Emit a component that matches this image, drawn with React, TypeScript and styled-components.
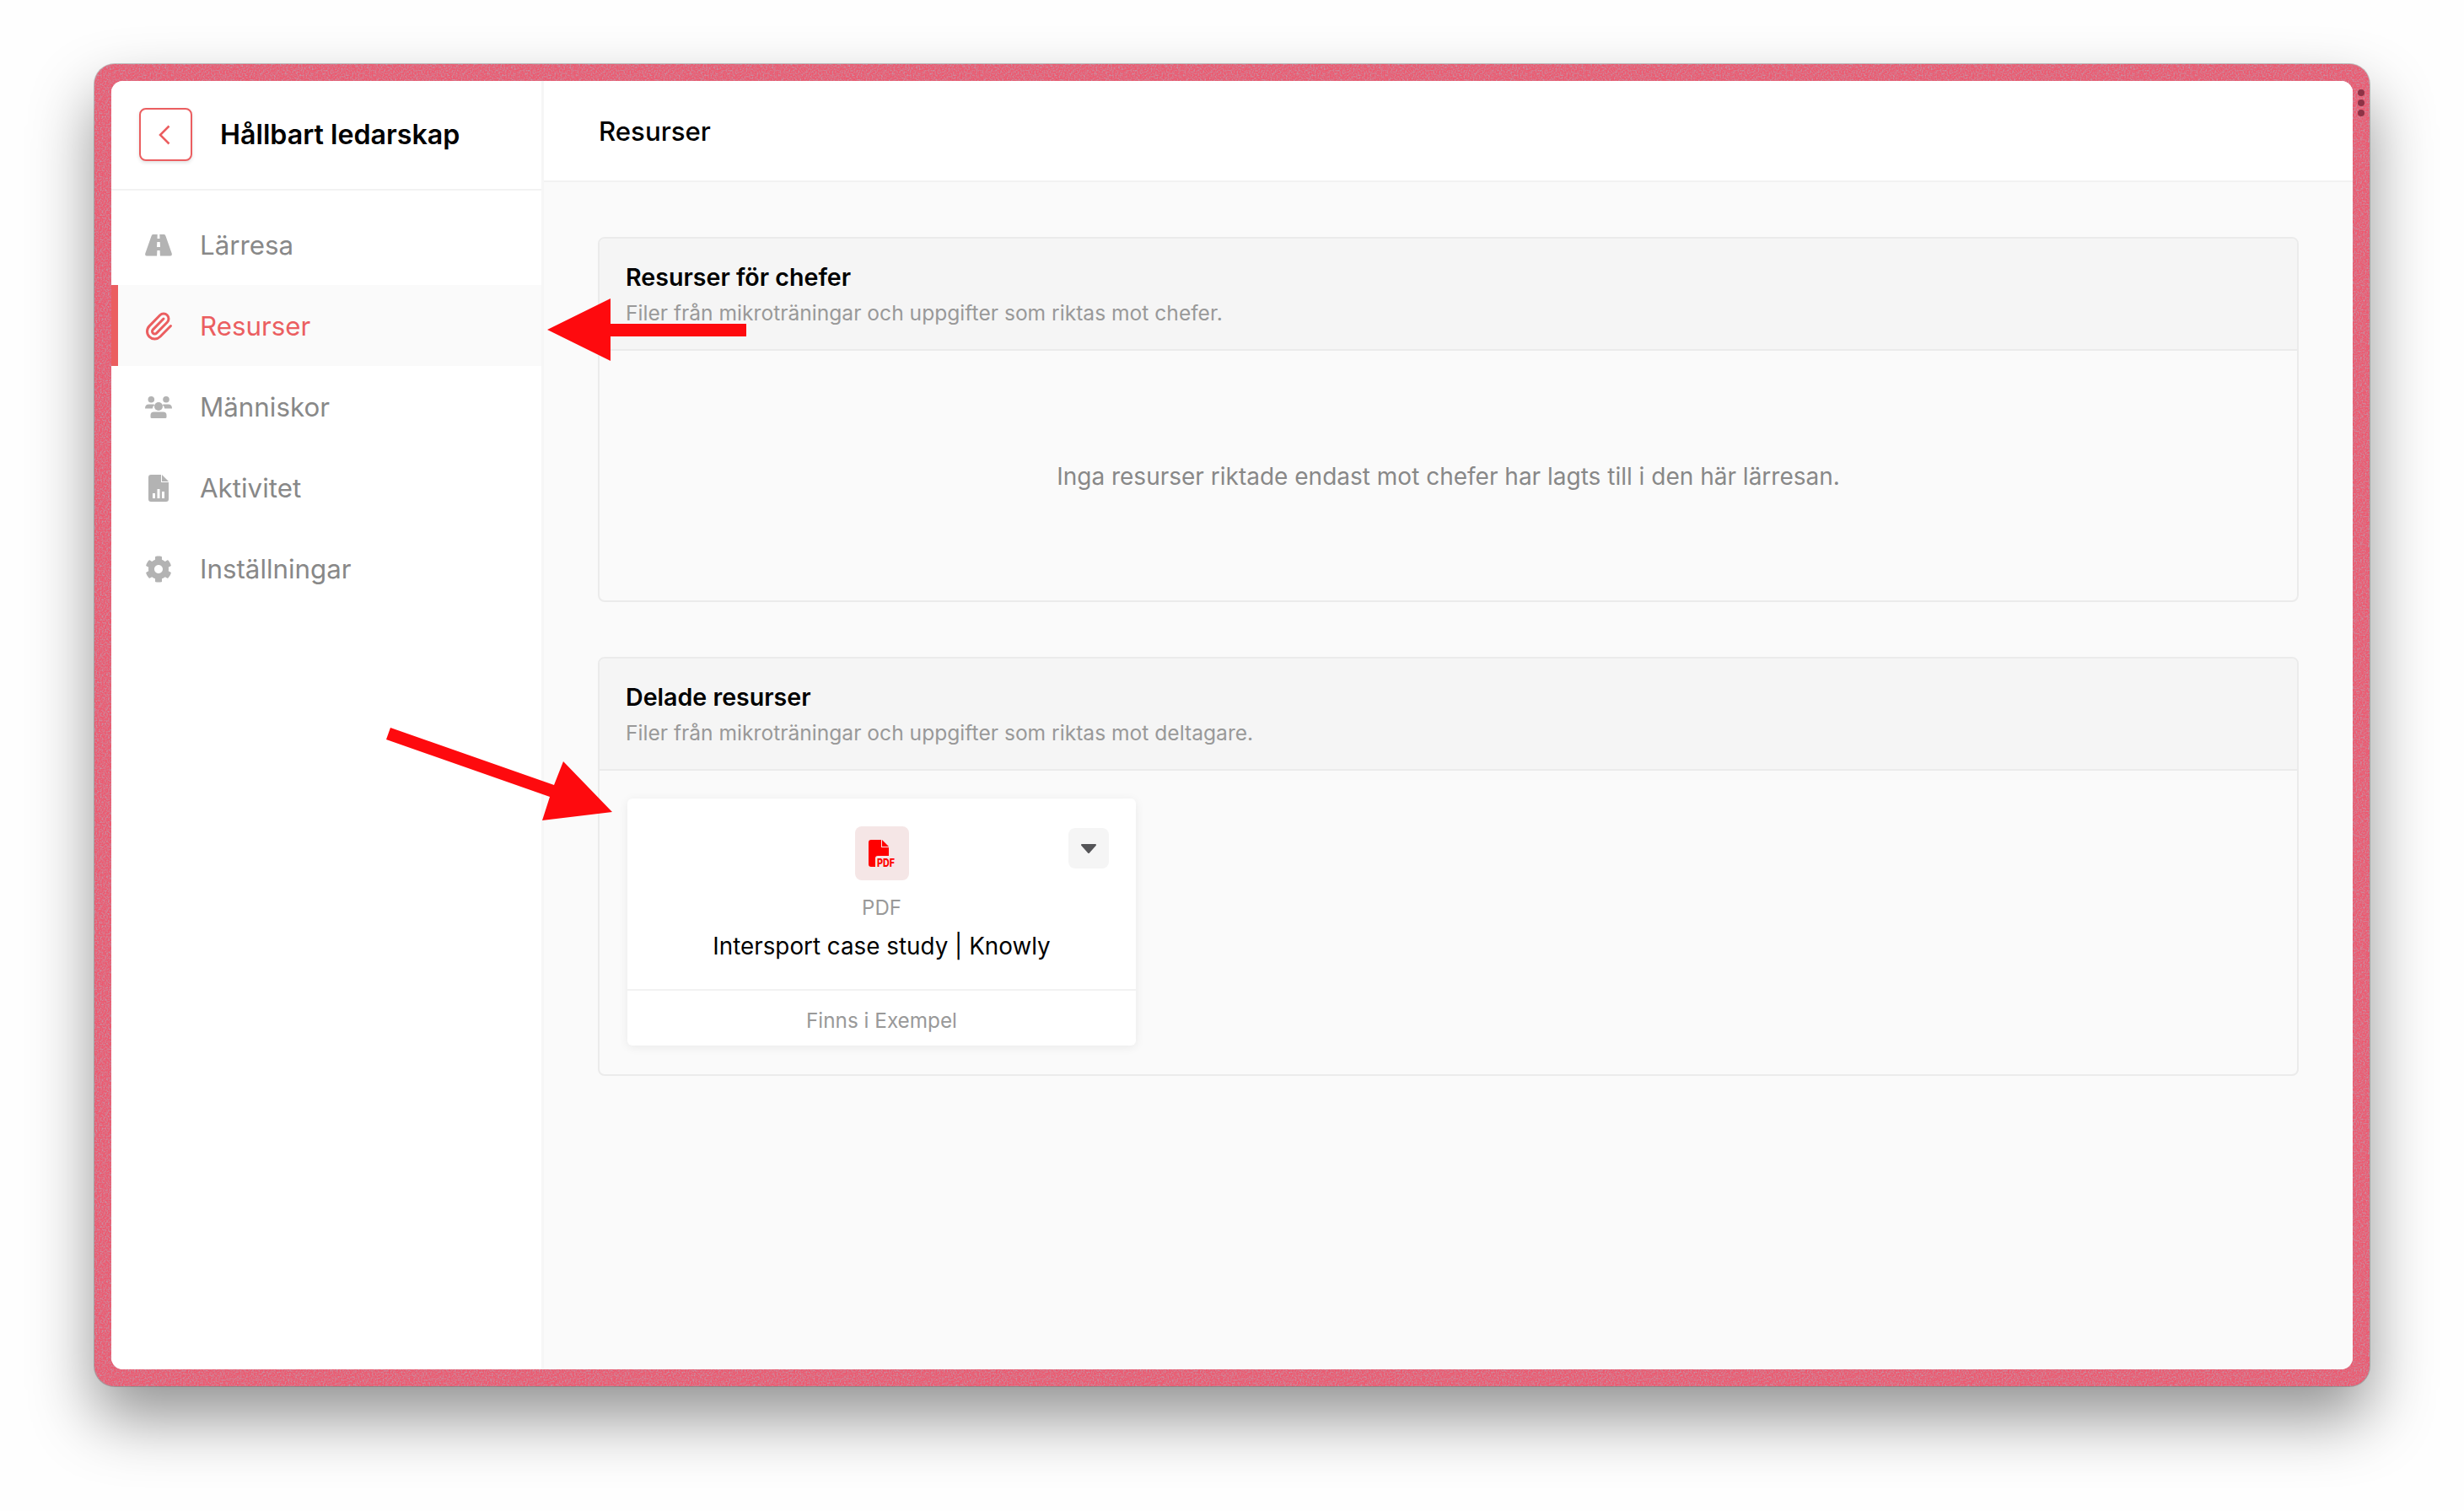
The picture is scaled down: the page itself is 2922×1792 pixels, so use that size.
import React from 'react';
import styled, { createGlobalStyle } from 'styled-components';
import { FaCog } from 'react-icons/fa';
import { Paperclip } from 'lucide-react';

const NOISE =
  "data:image/svg+xml,%3Csvg xmlns='http://www.w3.org/2000/svg' width='240' height='240'%3E%3Cfilter id='n'%3E%3CfeTurbulence type='fractalNoise' baseFrequency='0.55' numOctaves='2' stitchTiles='stitch'/%3E%3CfeColorMatrix values='0 0 0 0 0.5 0 0 0 0 0.36 0 0 0 0 0.45 0 0 0 1.8 -0.7'/%3E%3C/filter%3E%3Crect width='240' height='240' filter='url(%23n)'/%3E%3C/svg%3E";

const Global = createGlobalStyle`
  html, body {
    margin: 0;
    padding: 0;
    background: #fefefe;
  }
  body {
    font-family: Inter, "Liberation Sans", sans-serif;
  }
  * { box-sizing: border-box; }
`;

const Page = styled.div`
  position: relative;
  width: 2922px;
  height: 1792px;
  padding: 76px 112px 148px;
  overflow: hidden;
`;

const Frame = styled.div`
  position: relative;
  height: 100%;
  padding: 20px;
  border-radius: 24px;
  background-color: #ec5a70;
  background-image: url("${NOISE}");
  box-shadow: 0 0 0 1px rgba(90, 90, 90, 0.35), 0 38px 76px rgba(0, 0, 0, 0.42);
`;

const Dots = styled.div`
  position: absolute;
  top: 30px;
  right: 6px;
  display: flex;
  flex-direction: column;
  gap: 4px;
`;

const Dot = styled.span`
  width: 8px;
  height: 8px;
  border-radius: 50%;
  background: #8e3346;
`;

const Window = styled.div`
  display: flex;
  height: 100%;
  border-radius: 14px;
  overflow: hidden;
  background: #fff;
`;

const Sidebar = styled.aside`
  flex: 0 0 513px;
  background: #fff;
  border-right: 3px solid #f6f6f6;
`;

const SidebarHeader = styled.div`
  display: flex;
  align-items: center;
  gap: 33px;
  height: 130px;
  padding: 0 0 1px 33px;
  border-bottom: 2px solid #f2f2f2;
`;

const BackButton = styled.button`
  display: flex;
  align-items: center;
  justify-content: center;
  width: 63px;
  height: 63px;
  padding: 0 4px 0 0;
  background: #fff;
  border: 2px solid #eb5e60;
  border-radius: 8px;
  box-shadow: 0 2px 4px rgba(0, 0, 0, 0.12);
`;

const CourseTitle = styled.h1`
  margin: 0;
  font-size: 32.2px;
  font-weight: 600;
  color: #000;
  white-space: nowrap;
`;

const Nav = styled.nav`
  display: flex;
  flex-direction: column;
  padding-top: 16px;
`;

const NavItem = styled.a<{ $active?: boolean }>`
  display: flex;
  align-items: center;
  height: 96px;
  padding-left: ${p => (p.$active ? '30px' : '38px')};
  padding-top: 1px;
  gap: 31px;
  font-size: 31.3px;
  color: ${p => (p.$active ? '#eb5e60' : '#888888')};
  background: ${p => (p.$active ? '#fafafa' : 'transparent')};
  border-left: ${p => (p.$active ? '8px solid #eb5e60' : 'none')};
`;

const NavIcon = styled.span<{ $active?: boolean }>`
  display: flex;
  align-items: center;
  justify-content: center;
  width: 36px;
  height: 36px;
  color: ${p => (p.$active ? '#eb5e60' : '#b3b3b3')};
`;

const Main = styled.main`
  flex: 1;
  display: flex;
  flex-direction: column;
  background: #fafafa;
`;

const MainHeader = styled.header`
  display: flex;
  align-items: center;
  flex: 0 0 120px;
  padding: 1px 0 0 65px;
  background: #fff;
  border-bottom: 2px solid #f2f2f2;
  font-size: 31.2px;
  font-weight: 500;
  color: #000;
`;

const Content = styled.div`
  display: flex;
  flex-direction: column;
  gap: 65px;
  padding: 65px 64px;
`;

const Section = styled.section`
  border: 2px solid #ebebeb;
  border-radius: 8px;
  overflow: hidden;
`;

const SectionHeader = styled.div`
  display: flex;
  flex-direction: column;
  justify-content: center;
  gap: 10px;
  height: 133px;
  padding: 0 31px 0;
  background: #f5f5f5;
  border-bottom: 2px solid #ebebeb;
`;

const SectionTitle = styled.h2`
  margin: 0;
  font-size: 28.6px;
  font-weight: 600;
  color: #000;
`;

const SectionSub = styled.p`
  margin: 0;
  font-size: 24.6px;
  color: #999;
`;

const EmptyBody = styled.div`
  display: flex;
  align-items: center;
  justify-content: center;
  height: 296px;
  padding-top: 1px;
  font-size: 28px;
  color: #888;
`;

const CardArea = styled.div`
  padding: 33px 33px 34px;
`;

const Card = styled.article`
  position: relative;
  width: 603px;
  height: 293px;
  display: flex;
  flex-direction: column;
  background: #fff;
  border-radius: 6px;
  box-shadow: 0 2px 12px rgba(0, 0, 0, 0.07);
`;

const CardBody = styled.div`
  flex: 1;
  display: flex;
  flex-direction: column;
  align-items: center;
  padding-top: 33px;
  border-bottom: 2px solid #f2f2f2;
`;

const FileTile = styled.div`
  display: flex;
  align-items: center;
  justify-content: center;
  width: 64px;
  height: 64px;
  padding: 6px 0 0 4px;
  border-radius: 8px;
  background: #f5e6e6;
`;

const FileType = styled.div`
  margin-top: 18px;
  font-size: 24px;
  line-height: 30px;
  color: #999;
`;

const FileName = styled.div`
  margin-top: 12px;
  font-size: 27.8px;
  line-height: 36px;
  color: #000;
`;

const CardFooter = styled.div`
  display: flex;
  align-items: center;
  justify-content: center;
  height: 65px;
  padding-top: 4px;
  font-size: 24.3px;
  color: #999;
`;

const MenuButton = styled.button`
  position: absolute;
  top: 35px;
  right: 32px;
  display: flex;
  align-items: center;
  justify-content: center;
  width: 48px;
  height: 48px;
  padding: 0;
  border: none;
  border-radius: 8px;
  background: #f5f5f5;
`;

const ArrowLayer = styled.svg`
  position: absolute;
  inset: 0;
  pointer-events: none;
`;

const PdfIcon = () => (
  <svg width="36" height="38" viewBox="0 0 36 38">
    <path
      fill="#ff0000"
      d="M3 0H15V9H24V19H11Q8 19 8 22V32H3Q0 32 0 29V3Q0 0 3 0Z"
    />
    <path fill="#ff0000" d="M16 0L24 8H16Z" />
    <text
      x="10"
      y="31.500"
      fontFamily="Inter, sans-serif"
      fontSize="13"
      fontWeight="800"
      fill="#ff0000"
      textLength="21"
      lengthAdjust="spacingAndGlyphs"
    >
      PDF
    </text>
  </svg>
);

const RoadIcon = () => (
  <svg width="32" height="26" viewBox="0 0 32 26">
    <path
      fill="currentColor"
      fillRule="evenodd"
      d="M9.500 0H14.700L14.500 5H17.500L17.300 0H22.500Q24 0 24.500 2L31.700 22.500Q32.500 25.500 29.500 25.500H17.900L17.600 19H14.400L14.100 25.500H2.500Q-0.500 25.500 0.300 22.500L7.500 2Q8 0 9.500 0ZM14.300 9L14 15H18L17.700 9Z"
    />
  </svg>
);

const UsersIcon = () => (
  <svg width="32" height="26" viewBox="0 0 32 26">
    <g fill="currentColor">
      <circle cx="7.300" cy="3.800" r="3.800" />
      <circle cx="25" cy="3.800" r="3.800" />
      <circle cx="16" cy="12" r="5" />
      <path d="M0 14.500Q0 9.500 4.500 9.500H9.500Q10.800 9.500 11.500 10.300Q9 11.800 8.800 14.500Z" />
      <path d="M32 14.500Q32 9.500 27.500 9.500H22.500Q21.200 9.500 20.500 10.300Q23 11.800 23.200 14.500Z" />
      <path d="M6.500 24.500V22.500Q6.500 18.500 10.500 18.500H21.500Q25.500 18.500 25.500 22.500V24.500Q25.500 26 24 26H8Q6.500 26 6.500 24.500Z" />
    </g>
  </svg>
);

const ReportIcon = () => (
  <svg width="24" height="32" viewBox="0 0 24 32">
    <path
      fill="currentColor"
      fillRule="evenodd"
      d="M3 0H15V9H24V29Q24 32 21 32H3Q0 32 0 29V3Q0 0 3 0ZM5 22V28H8V22ZM10.500 17V28H13.500V17ZM16 20V28H19V20Z"
    />
    <path fill="currentColor" d="M16 0L24 8H16Z" />
  </svg>
);

const navItems = [
  { label: 'Lärresa', icon: <RoadIcon /> },
  { label: 'Resurser', icon: <Paperclip size={36} strokeWidth={2} />, active: true },
  { label: 'Människor', icon: <UsersIcon /> },
  { label: 'Aktivitet', icon: <ReportIcon /> },
  { label: 'Inställningar', icon: <FaCog size={32} /> },
];

export default function App() {
  return (
    <Page>
      <Global />
      <Frame>
        <Window>
          <Sidebar>
            <SidebarHeader>
              <BackButton>
                <svg width="14" height="24" viewBox="0 0 14 24" fill="none" stroke="#eb5e60" strokeWidth="2.500">
                  <path d="M12.500 1.500L2 12L12.500 22.500" />
                </svg>
              </BackButton>
              <CourseTitle>Hållbart ledarskap</CourseTitle>
            </SidebarHeader>
            <Nav>
              {navItems.map(item => (
                <NavItem key={item.label} $active={item.active}>
                  <NavIcon $active={item.active}>{item.icon}</NavIcon>
                  {item.label}
                </NavItem>
              ))}
            </Nav>
          </Sidebar>
          <Main>
            <MainHeader>Resurser</MainHeader>
            <Content>
              <Section>
                <SectionHeader>
                  <SectionTitle>Resurser för chefer</SectionTitle>
                  <SectionSub>Filer från mikroträningar och uppgifter som riktas mot chefer.</SectionSub>
                </SectionHeader>
                <EmptyBody>Inga resurser riktade endast mot chefer har lagts till i den här lärresan.</EmptyBody>
              </Section>
              <Section>
                <SectionHeader>
                  <SectionTitle>Delade resurser</SectionTitle>
                  <SectionSub>Filer från mikroträningar och uppgifter som riktas mot deltagare.</SectionSub>
                </SectionHeader>
                <CardArea>
                  <Card>
                    <CardBody>
                      <FileTile>
                        <PdfIcon />
                      </FileTile>
                      <FileType>PDF</FileType>
                      <FileName>Intersport case study | Knowly</FileName>
                    </CardBody>
                    <CardFooter>Finns i Exempel</CardFooter>
                    <MenuButton>
                      <svg width="18" height="11" viewBox="0 0 18 11">
                        <path fill="#555558" stroke="#555558" strokeWidth="2" strokeLinejoin="round" d="M1 1H17L9 10Z" />
                      </svg>
                    </MenuButton>
                  </Card>
                </CardArea>
              </Section>
            </Content>
          </Main>
        </Window>
        <Dots>
          <Dot />
          <Dot />
          <Dot />
        </Dots>
      </Frame>
      <ArrowLayer width="2922" height="1792" viewBox="0 0 2922 1792">
        <polygon fill="#fe0a0e" points="649,391 724,354 724,384 885,384 885,399 724,399 724,428" />
        <polygon fill="#fe0a0e" points="463,863 657,931 668,903 726,963 643,973 652,945 458,877" />
      </ArrowLayer>
    </Page>
  );
}
